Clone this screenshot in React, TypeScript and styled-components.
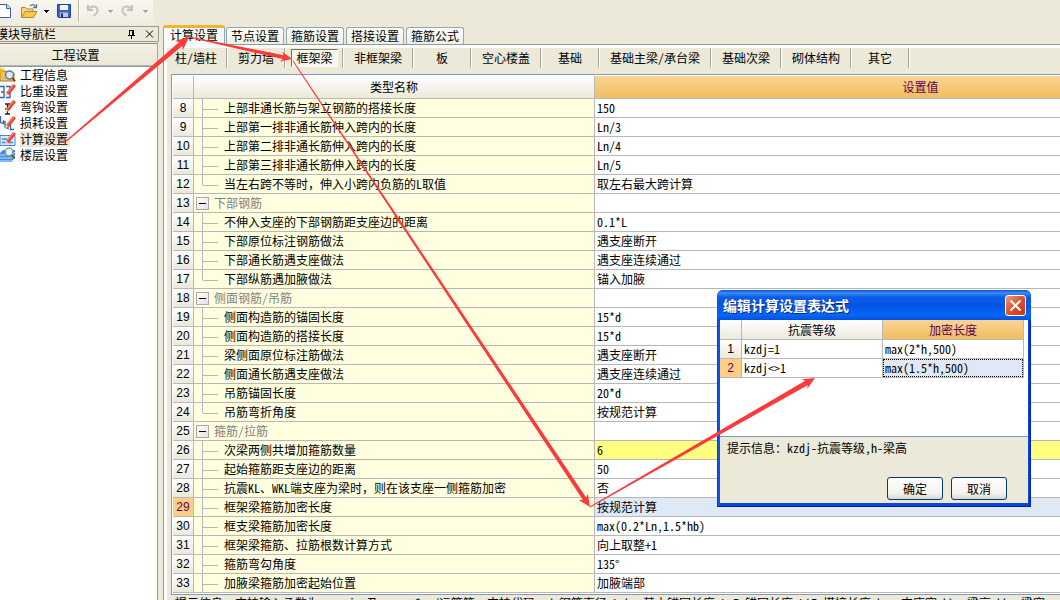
import React from 'react';
import styled, { createGlobalStyle, css } from 'styled-components';

const GlobalStyle = createGlobalStyle`
  * { box-sizing: border-box; }
  body {
    margin: 0;
    overflow: hidden;
    background: #ece9d8;
    color: #000;
    font: 12px/16px "Noto Sans Mono CJK SC", "Noto Sans CJK SC", "Liberation Mono", monospace;
  }
  button { font: inherit; color: inherit; margin: 0; padding: 0; border: 0; background: none; white-space: nowrap; }
`;

const GRID = '#b8b8b8';

const Page = styled.div`
  position: relative;
  display: flex;
  flex-direction: column;
  height: 100vh;
  overflow: hidden;
`;

const Toolbar = styled.header`
  display: flex;
  align-items: flex-start;
  align-self: flex-start;
  width: 153px;
  height: 25px;
  background: linear-gradient(#f8f7f1, #efece0);
`;

const ToolButton = styled.button<{ $width: number }>`
  display: block;
  width: ${(p) => p.$width}px;
  height: 24px;
  flex: none;
  svg { display: block; }
`;

const ToolDivider = styled.span`
  width: 2px;
  height: 22px;
  flex: none;
  border-left: 1px solid #b9b5a2;
  background: #fff;
`;

const Main = styled.div`
  display: flex;
  flex: 1;
  min-height: 0;
`;

const Sidebar = styled.aside`
  display: flex;
  flex-direction: column;
  flex: none;
  width: 159px;
  padding-top: 1px;
`;

const SidebarTitle = styled.div`
  display: flex;
  align-items: center;
  height: 16px;
  border: 1px solid #9c9a8c;
  border-left: 0;
  span { flex: 1; margin-left: -4px; line-height: 14px; white-space: nowrap; }
  button { width: 18px; height: 14px; }
  svg { display: block; margin: 0 auto; }
`;

const SidebarHeading = styled.button`
  height: 23px;
  margin: 1px 1px 0 0;
  padding-right: 6px;
  line-height: 20px;
  border-top: 1px solid #8f8d80;
  border-right: 1px solid #a9a798;
  border-bottom: 1px solid #b9b7a8;
  background: linear-gradient(#f4f2e8, #eae7d6);
`;

const NavList = styled.nav`
  display: flex;
  flex-direction: column;
  flex: 1;
  margin-right: 1px;
  border-top: 1px solid #7f9db9;
  border-right: 1px solid #7f9db9;
  background: #fff;
`;

const NavItem = styled.a<{ $active?: boolean }>`
  display: flex;
  height: 16px;
  gap: 4px;
  color: #000;
  text-decoration: none;
  svg { flex: none; }
  span { padding-right: 2px; background: ${(p) => (p.$active ? '#ece9d8' : 'none')}; }
`;

const Content = styled.main`
  display: flex;
  flex-direction: column;
  flex: 1;
  min-width: 0;
  padding-left: 4px;
`;

const Tabs = styled.div`
  display: flex;
  align-items: flex-end;
  height: 19px;
  gap: 2px;
`;

const Tab = styled.button<{ $active?: boolean }>`
  height: 17px;
  width: 58px;
  line-height: 16px;
  border: 1px solid #91a7b4;
  border-bottom: 0;
  border-radius: 3px 3px 0 0;
  background: linear-gradient(#fff, #f0efe6);
  ${(p) => p.$active && css`
    position: relative;
    z-index: 1;
    width: 62px;
    height: 20px;
    margin-right: -1px;
    margin-bottom: -1px;
    padding-bottom: 3px;
    line-height: 14px;
    border-top: 3px solid #f5b133;
    background: #fbfbf9;
  `}
`;

const Pane = styled.section`
  display: flex;
  flex-direction: column;
  flex: 1;
  min-height: 0;
  border-top: 1px solid #919b9c;
  border-left: 1px solid #919b9c;
`;

const PaneInner = styled.div`
  flex: 1;
  border-top: 3px solid #fcfcfa;
  border-left: 3px solid #fcfcfa;
`;

const SubTabs = styled.div`
  display: flex;
  height: 20px;
`;

const SubTab = styled.button<{ $active?: boolean; $tight?: boolean }>`
  min-width: 58px;
  flex: none;
  padding: ${(p) => (p.$tight ? '0 9px 0 8px' : '0 10px 0 11px')};
  border-right: 1px solid #aca899;
  box-shadow: 1px 0 0 #fff;
  span { display: block; line-height: 20px; }
  ${(p) => p.$active && css`
    padding: 1px 4px 1px 6px;
    span {
      height: 18px;
      line-height: 16px;
      border: 1px solid;
      border-color: #716f64 #fff #fff #716f64;
      background: #f6f5ee;
    }
  `}
`;

const TableFrame = styled.div`
  margin: 6px 0 0 4px;
  padding: 1px 0 1px 1px;
  border: 1px solid #7f9db9;
  border-right: 0;
  background: #fff;
  overflow: hidden;
`;

const Grid = styled.table`
  min-width: 1074px;
  table-layout: fixed;
  border-collapse: separate;
  border-spacing: 0;
`;

const HeadCell = styled.th<{ $hot?: boolean; $height: number }>`
  height: ${(p) => p.$height}px;
  padding: 0;
  font-weight: normal;
  line-height: 16px;
  border-right: 1px solid ${GRID};
  border-bottom: 1px solid ${GRID};
  color: ${(p) => (p.$hot ? '#5a005a' : '#000')};
  background: ${(p) => (p.$hot ? 'linear-gradient(#f9d494, #f0be5e)' : 'linear-gradient(#fff, #ece9dc)')};
`;

const RowHead = styled.th<{ $hot?: boolean }>`
  padding: 0;
  font: 12px/18px "Liberation Sans", Arial, sans-serif;
  border-right: 1px solid ${GRID};
  border-bottom: 1px solid ${GRID};
  color: ${(p) => (p.$hot ? '#5a005a' : '#000')};
  background: ${(p) => (p.$hot ? '#ffce84' : 'linear-gradient(#fff, #ebe8dc)')};
`;

const Cell = styled.td<{ $tone?: 'name' | 'changed' | 'current' }>`
  height: 19px;
  padding: 0 0 0 2px;
  line-height: 18px;
  white-space: nowrap;
  border-right: 1px solid ${GRID};
  border-bottom: 1px solid ${GRID};
  background: ${(p) => ({ name: '#ffffe0', changed: '#ffff80', current: '#dfe8f5', none: '#fff' })[p.$tone ?? 'none']};
`;

const TreeCell = styled.div`
  display: flex;
  align-items: center;
  height: 18px;
`;

const Branch = styled.span<{ $last: boolean }>`
  align-self: flex-start;
  width: 16px;
  height: ${(p) => (p.$last ? 10 : 19)}px;
  margin: 0 6px -1px;
  border-left: 1px solid ${GRID};
  &::before {
    content: '';
    display: block;
    height: 10px;
    border-bottom: 1px solid ${GRID};
  }
`;

const Toggle = styled.button`
  display: flex;
  align-items: center;
  justify-content: center;
  width: 13px;
  height: 13px;
  margin-right: 5px;
  border: 1px solid #a9a9a9;
  background: linear-gradient(135deg, #fff, #e2e2e2);
  &::before { content: ''; width: 7px; height: 1px; background: #000; }
`;

const GroupLabel = styled.span`
  color: #808080;
`;

const Hint = styled.p`
  margin: 0 0 0 8px;
  line-height: 16px;
  white-space: nowrap;
`;

const Dialog = styled.section`
  position: absolute;
  left: 717px;
  top: 290px;
  width: 314px;
  padding: 0 3px 3px;
  border-radius: 6px 6px 0 0;
  background: linear-gradient(90deg, #0831d9, #1060f0 2px, #0a48dc 3px, #0a48dc 311px, #0840e0 312px, #001ea0);
  border-bottom: 1px solid #001ea0;
`;

const DialogTitle = styled.header`
  display: flex;
  align-items: center;
  justify-content: space-between;
  height: 30px;
  margin: 0 -3px;
  padding: 0 5px 0 6px;
  border-radius: 6px 6px 0 0;
  background: linear-gradient(#0a4fd6, #3a8df8 3px, #0a5ce8 7px, #0355e3 16px, #0567fa 25px, #0350dc);
  h2 { margin: 0; color: #fff; font-size: 14px; line-height: 20px; text-shadow: 1px 1px 0 #0a2a80; }
`;

const CloseButton = styled.button`
  width: 21px;
  height: 21px;
  border: 1px solid #fff;
  border-radius: 3px;
  background: linear-gradient(135deg, #f09a80, #e0502c 50%, #c23610);
  svg { display: block; margin: 0 auto; }
`;

const DialogGrid = styled.div`
  height: 117px;
  background: #fff;
  border-bottom: 1px solid #7f9db9;
  table { width: 304px; table-layout: fixed; border-collapse: separate; border-spacing: 0; }
`;

const Focus = styled.div`
  height: 18px;
  margin-left: -2px;
  padding-left: 1px;
  line-height: 16px;
  border: 1px dotted #000;
`;

const DialogBody = styled.div`
  padding: 3px 21px 3px 7px;
  background: #ece9d8;
  p { margin: 0 0 21px; line-height: 16px; }
`;

const DialogButtons = styled.div`
  display: flex;
  justify-content: flex-end;
  gap: 8px;
`;

const PushButton = styled.button`
  width: 56px;
  height: 23px;
  line-height: 20px;
  border: 1px solid #003c74;
  border-radius: 3px;
  background: linear-gradient(#fff, #f4f3ee 70%, #dcd8cc);
`;

const Annotations = styled.svg`
  position: absolute;
  left: 0;
  top: 0;
  z-index: 2;
  pointer-events: none;
`;

type Row = { name: string; value?: string; group?: boolean; last?: boolean };

const rows: Row[] = [
  { name: '上部非通长筋与架立钢筋的搭接长度', value: '150' },
  { name: '上部第一排非通长筋伸入跨内的长度', value: 'Ln/3' },
  { name: '上部第二排非通长筋伸入跨内的长度', value: 'Ln/4' },
  { name: '上部第三排非通长筋伸入跨内的长度', value: 'Ln/5' },
  { name: '当左右跨不等时，伸入小跨内负筋的L取值', value: '取左右最大跨计算', last: true },
  { name: '下部钢筋', group: true },
  { name: '不伸入支座的下部钢筋距支座边的距离', value: '0.1*L' },
  { name: '下部原位标注钢筋做法', value: '遇支座断开' },
  { name: '下部通长筋遇支座做法', value: '遇支座连续通过' },
  { name: '下部纵筋遇加腋做法', value: '锚入加腋', last: true },
  { name: '侧面钢筋/吊筋', group: true },
  { name: '侧面构造筋的锚固长度', value: '15*d' },
  { name: '侧面构造筋的搭接长度', value: '15*d' },
  { name: '梁侧面原位标注筋做法', value: '遇支座断开' },
  { name: '侧面通长筋遇支座做法', value: '遇支座连续通过' },
  { name: '吊筋锚固长度', value: '20*d' },
  { name: '吊筋弯折角度', value: '按规范计算', last: true },
  { name: '箍筋/拉筋', group: true },
  { name: '次梁两侧共增加箍筋数量', value: '6' },
  { name: '起始箍筋距支座边的距离', value: '50' },
  { name: '抗震KL、WKL端支座为梁时，则在该支座一侧箍筋加密', value: '否' },
  { name: '框架梁箍筋加密长度', value: '按规范计算' },
  { name: '框支梁箍筋加密长度', value: 'max(0.2*Ln,1.5*hb)' },
  { name: '框架梁箍筋、拉筋根数计算方式', value: '向上取整+1' },
  { name: '箍筋弯勾角度', value: '135°' },
  { name: '加腋梁箍筋加密起始位置', value: '加腋端部' },
];

const FIRST_ROW = 8;
const CHANGED_ROW = 26;
const CURRENT_ROW = 29;

const tabs = ['计算设置', '节点设置', '箍筋设置', '搭接设置', '箍筋公式'];
const subTabs = ['柱/墙柱', '剪力墙', '框架梁', '非框架梁', '板', '空心楼盖', '基础', '基础主梁/承台梁', '基础次梁', '砌体结构', '其它'];

const Pencil = () => (
  <>
    <path d="m6 10 7-9 3 2-7 9z" fill="#e8452c" />
    <path d="m7.500 9.500 6.500-8" stroke="#ff9a80" />
    <path d="m6 9.500-1 3.500 3.500-1z" fill="#f6d29a" />
  </>
);

const navItems = [
  {
    label: '工程信息',
    icon: (
      <>
        <path d="M0 4h6l1 2h7v8H0z" fill="#e9c168" stroke="#a87c28" />
        <path d="M1 0v7M-2 3.500h7M-1 1l5 5M4 1-1 6" stroke="#f7b500" />
        <circle cx="9.500" cy="8" r="4" fill="#d7ecfb" stroke="#5f7890" strokeWidth="1.500" />
        <path d="m12.500 11 2.500 3.500" stroke="#6b4a20" strokeWidth="2" />
      </>
    ),
  },
  {
    label: '比重设置',
    icon: (
      <>
        <path d="M0 3.500h4v11H0M1 9h3M6 3.500h4v11H6M7 9h3" fill="none" stroke="#2c5fb8" strokeWidth="1.300" />
        <Pencil />
      </>
    ),
  },
  {
    label: '弯钩设置',
    icon: (
      <>
        <path d="M5 5h5M7.500 5v10M5 15h5M5 10h5" fill="none" stroke="#222" strokeWidth="1.300" />
        <Pencil />
      </>
    ),
  },
  {
    label: '损耗设置',
    icon: (
      <>
        <path d="M.5 1v6.500l3 1V5m1.500 1v6l3 1.500V9m2.500 0v5.500H14" fill="none" stroke="#3263b0" strokeWidth="1.300" />
        <Pencil />
      </>
    ),
  },
  {
    label: '计算设置',
    icon: (
      <>
        <path d="M0 4.500h15v10H0z" fill="#d8eafc" stroke="#4a86d0" />
        <path d="M2 8h5M2 11.500h11" stroke="#4a86d0" strokeWidth="1.500" />
        <Pencil />
      </>
    ),
  },
  {
    label: '楼层设置',
    icon: (
      <>
        <path d="m0 6 3-3h12v8l-3 4H0z" fill="#3f8fe0" />
        <path d="M0 8h12l3-3M0 11h12l3-3M0 14h12l3-3" fill="none" stroke="#c7e2fb" />
        <circle cx="9" cy="5" r="3.800" fill="#e6f4ff" stroke="#7890a8" strokeWidth="1.300" />
        <path d="m12 8 2.500 3.500" stroke="#6b4a20" strokeWidth="1.800" />
      </>
    ),
  },
];

const DropArrow = ({ color }: { color: string }) => (
  <svg width="9" height="24" viewBox="0 0 9 24"><path d="M2 10h5v1H6v1H5v1H4v-1H3v-1H2z" fill={color} /></svg>
);

/** Outline of an arrow whose shaft widens from a point to the given width. */
function arrow(x1: number, y1: number, x2: number, y2: number, width: number, head: number) {
  const length = Math.hypot(x2 - x1, y2 - y1);
  const ux = (x2 - x1) / length;
  const uy = (y2 - y1) / length;
  const at = (d: number, side: number) => `${x1 + ux * d - uy * side},${y1 + uy * d + ux * side}`;
  const neck = length - head;
  return [at(0, -0.5), at(neck + 1, -width / 2), at(neck - 1, -head / 2), at(length, 0), at(neck - 1, head / 2), at(neck + 1, width / 2), at(0, 0.5)].join(' ');
}

export default function App() {
  return (
    <Page>
      <GlobalStyle />
      <Toolbar>
        <ToolButton $width={20} aria-label="新建">
          <svg width="20" height="24" viewBox="0 0 20 24">
            <path d="M-2 4.500h9l3.500 3.500v9.500H-2z" fill="#fff" stroke="#3a5f9a" />
            <path d="M6.500 4.500v4h4" fill="#cfe0f5" stroke="#3a5f9a" />
          </svg>
        </ToolButton>
        <ToolButton $width={22} aria-label="打开">
          <svg width="22" height="24" viewBox="0 0 22 24">
            <path d="M1.500 17V7.500h4l1.500 1.500h6V12" fill="#f5d987" stroke="#b28a2c" />
            <path d="M1.500 17.500 5 11.500h12l-3.500 6z" fill="#fbc94a" stroke="#b28a2c" />
            <path d="M10 6c1.500-2 4-2 5.500.5M16.500 4v3.500H13" fill="none" stroke="#5678a8" strokeWidth="1.300" />
          </svg>
        </ToolButton>
        <ToolButton $width={15} aria-label="打开选项"><DropArrow color="#000" /></ToolButton>
        <ToolButton $width={21} aria-label="保存">
          <svg width="21" height="24" viewBox="0 0 21 24">
            <path d="M.5 4.500h13v13h-12l-1-1z" fill="#3b62d0" stroke="#23408f" />
            <path d="M3 5h8v5H3z" fill="#f2f6ff" />
            <path d="M3 12.500h8V17H3z" fill="#bccbe8" />
            <path d="M4 13.500h2V17H4z" fill="#1d2f6c" />
          </svg>
        </ToolButton>
        <ToolDivider />
        <ToolButton $width={26} aria-label="撤销" disabled>
          <svg width="26" height="24" viewBox="0 0 26 24">
            <path d="M8 5v5h5" fill="none" stroke="#c3c0b3" strokeWidth="2" />
            <path d="M8.500 9.500c3-4.500 9-3.500 9 .8 0 2.500-1.500 4-4 5.500" fill="none" stroke="#c9c6ba" strokeWidth="2" />
          </svg>
        </ToolButton>
        <ToolButton $width={13} aria-label="撤销选项" disabled><DropArrow color="#aca899" /></ToolButton>
        <ToolButton $width={22} aria-label="恢复" disabled>
          <svg width="22" height="24" viewBox="0 0 22 24">
            <path d="M13 5v5H8" fill="none" stroke="#c3c0b3" strokeWidth="2" />
            <path d="M12.500 9.500c-3-4.500-9-3.500-9 .8 0 2.500 1.500 4 4 5.500" fill="none" stroke="#c9c6ba" strokeWidth="2" />
          </svg>
        </ToolButton>
        <ToolButton $width={10} aria-label="恢复选项" disabled><DropArrow color="#aca899" /></ToolButton>
      </Toolbar>

      <Main>
        <Sidebar>
          <SidebarTitle>
            <span>模块导航栏</span>
            <button aria-label="固定">
              <svg width="9" height="10" viewBox="0 0 9 10"><path d="M2.500 1v5M2 1.500h4M5.500 1v5M6.500 1v5M1 6.500h7M4.500 7v3" fill="none" stroke="#000" /></svg>
            </button>
            <button aria-label="关闭">
              <svg width="9" height="10" viewBox="0 0 9 10"><path d="m1 1.500 7 7M8 1.500l-7 7" stroke="#000" /></svg>
            </button>
          </SidebarTitle>
          <SidebarHeading>工程设置</SidebarHeading>
          <NavList>
            {navItems.map((item) => (
              <NavItem key={item.label} href="#" $active={item.label === '计算设置'}>
                <svg width="16" height="16" viewBox="0 0 16 16" fill="none">{item.icon}</svg>
                <span>{item.label}</span>
              </NavItem>
            ))}
          </NavList>
        </Sidebar>

        <Content>
          <Tabs role="tablist">
            {tabs.map((tab, i) => (
              <Tab key={tab} role="tab" aria-selected={i === 0} $active={i === 0}>{tab}</Tab>
            ))}
          </Tabs>
          <Pane>
            <PaneInner>
              <SubTabs role="tablist">
                {subTabs.map((tab, i) => (
                  <SubTab key={tab} role="tab" aria-selected={i === 2} $active={i === 2} $tight={i === 0}>
                    <span>{tab}</span>
                  </SubTab>
                ))}
              </SubTabs>
              <TableFrame>
                <Grid>
                  <colgroup>
                    <col style={{ width: 21 }} />
                    <col style={{ width: 401 }} />
                    <col />
                  </colgroup>
                  <thead>
                    <tr>
                      <HeadCell $height={23} aria-label="序号" />
                      <HeadCell $height={23}>类型名称</HeadCell>
                      <HeadCell $height={23} $hot>设置值</HeadCell>
                    </tr>
                  </thead>
                  <tbody>
                    {rows.map((row, i) => {
                      const number = FIRST_ROW + i;
                      const tone = number === CHANGED_ROW ? 'changed' : number === CURRENT_ROW ? 'current' : undefined;
                      return (
                        <tr key={number}>
                          <RowHead scope="row" $hot={number === CURRENT_ROW}>{number}</RowHead>
                          <Cell $tone="name">
                            <TreeCell>
                              {row.group ? (
                                <>
                                  <Toggle aria-label="折叠" />
                                  <GroupLabel>{row.name}</GroupLabel>
                                </>
                              ) : (
                                <>
                                  <Branch $last={!!row.last} />
                                  <span>{row.name}</span>
                                </>
                              )}
                            </TreeCell>
                          </Cell>
                          <Cell $tone={tone}>{row.value}</Cell>
                        </tr>
                      );
                    })}
                  </tbody>
                </Grid>
              </TableFrame>
              <Hint>
                提示信息：支持输入函数为max,min 及+、-、*、/运算符，支持代码：d-钢筋直径,Lab--基本锚固长度,LaE-锚固长度,LlE-搭接长度,hc--支座宽,hb--梁高,bb--梁宽
              </Hint>
            </PaneInner>
          </Pane>
        </Content>
      </Main>

      <Dialog role="dialog" aria-labelledby="dialog-title">
        <DialogTitle>
          <h2 id="dialog-title">编辑计算设置表达式</h2>
          <CloseButton aria-label="关闭">
            <svg width="13" height="13" viewBox="0 0 13 13"><path d="m1.500 1.500 10 10M11.500 1.500l-10 10" stroke="#fff" strokeWidth="2" /></svg>
          </CloseButton>
        </DialogTitle>
        <DialogGrid>
          <table>
            <colgroup>
              <col style={{ width: 22 }} />
              <col />
              <col />
            </colgroup>
            <thead>
              <tr>
                <HeadCell $height={20} aria-label="序号" />
                <HeadCell $height={20}>抗震等级</HeadCell>
                <HeadCell $height={20} $hot>加密长度</HeadCell>
              </tr>
            </thead>
            <tbody>
              <tr>
                <RowHead scope="row">1</RowHead>
                <Cell>kzdj=1</Cell>
                <Cell>max(2*h,500)</Cell>
              </tr>
              <tr>
                <RowHead scope="row" $hot>2</RowHead>
                <Cell>kzdj&lt;&gt;1</Cell>
                <Cell $tone="current"><Focus>max(1.5*h,500)</Focus></Cell>
              </tr>
            </tbody>
          </table>
        </DialogGrid>
        <DialogBody>
          <p>提示信息：kzdj-抗震等级,h-梁高</p>
          <DialogButtons>
            <PushButton>确定</PushButton>
            <PushButton>取消</PushButton>
          </DialogButtons>
        </DialogBody>
      </Dialog>

      <Annotations width="1060" height="600" viewBox="0 0 1060 600" fill="#fc3a3a" aria-hidden="true">
        <polygon points={arrow(64, 143, 189, 37, 5, 12)} />
        <polygon points={arrow(189, 37, 292, 59, 4, 10)} />
        <polygon points={arrow(293, 61, 590, 507, 4, 11)} />
        <polygon points={arrow(590, 507, 815, 378, 5, 11)} />
      </Annotations>
    </Page>
  );
}
